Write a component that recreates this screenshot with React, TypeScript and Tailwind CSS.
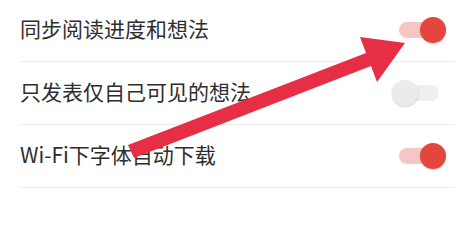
import React from "react";

const settings = [
  { label: "同步阅读进度和想法", on: true },
  { label: "只发表仅自己可见的想法", on: false },
  { label: "Wi-Fi下字体自动下载", on: true },
];

const Toggle = ({ on }: { on: boolean }) => (
  <div className="relative w-[54px] h-[26px]">
    <div
      className={`absolute left-[7px] right-[7px] top-[5px] h-[16px] rounded-full ${
        on ? "bg-[#f5c6c3]" : "bg-[#efefef]"
      }`}
    />
    <div
      className={`absolute top-0 w-[26px] h-[26px] rounded-full shadow-[0_1px_2px_rgba(0,0,0,0.18)] ${
        on ? "right-0 bg-[#e4463e]" : "left-0 bg-[#ebebeb]"
      }`}
    />
  </div>
);

export default function App() {
  return (
    <div
      className="relative w-[465px] h-[206px] overflow-hidden bg-white"
      style={{ fontFamily: '"Noto Sans CJK SC", "Noto Sans", sans-serif' }}
    >
      <div className="-mt-[1px]">
        {settings.map((s) => (
          <div key={s.label} className="ml-5 mr-[10px] h-[63px] border-b border-[#ececec] flex items-center justify-between">
            <span className="text-[21px] text-[#2e2e2e] leading-none -mt-[3px]">{s.label}</span>
            <div className="mr-[9px]">
              <Toggle on={s.on} />
            </div>
          </div>
        ))}
      </div>

      {/* annotation arrow */}
      <svg className="absolute inset-0 pointer-events-none" width="465" height="206" viewBox="0 0 465 206">
        <polygon
          points="128,145 366,53 360,37 405,43 377,82 371,66 134,158"
          fill="#e62e45"
        />
      </svg>
    </div>
  );
}
